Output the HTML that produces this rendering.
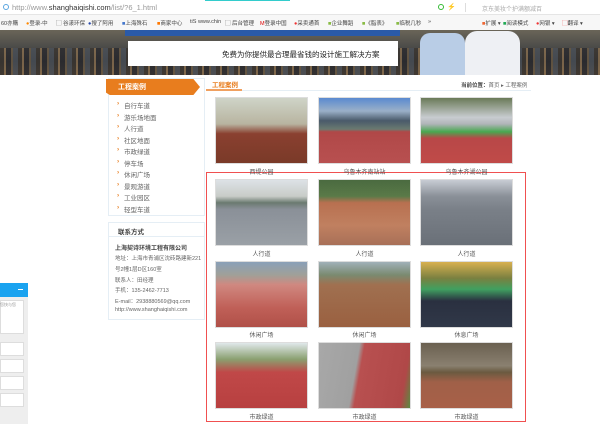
<!DOCTYPE html>
<html><head><meta charset="utf-8"><style>
*{margin:0;padding:0;box-sizing:border-box}
body{width:600px;height:424px;overflow:hidden;background:#fff;font-family:"Liberation Sans","Noto Sans CJK SC",sans-serif;position:relative;font-size:6px;color:#555}
.a{position:absolute;white-space:nowrap}
.img{position:absolute;width:93px;height:67px;border:1px solid #ddd}
.cap{position:absolute;width:93px;text-align:center;font-size:6px;color:#555}
.li{position:absolute;left:124px;font-size:6.5px;color:#666;white-space:nowrap}
.li:before{content:"›";color:#e87d1e;position:absolute;left:-7px;font-weight:bold}
.ct{position:absolute;left:115px;font-size:5.5px;color:#666;white-space:nowrap}
.bm{position:absolute;top:19px;font-size:5.5px;color:#444;white-space:nowrap}
</style></head><body>
<div class="a" style="left:0;top:0;width:600px;height:15px;background:#fff;border-bottom:1px solid #e5e5e5"></div>
<div class="a" style="left:3px;top:4px;width:6px;height:6px;border:1px solid #5aa6e0;border-radius:50%"></div>
<div class="a" style="left:12px;top:3px;font-size:7.5px;color:#999">http://www.<span style="color:#333">shanghaiqishi.com</span>/list/?6_1.html</div>
<div class="a" style="left:205px;top:0;width:85px;height:1px;background:#3cc"></div>
<div class="a" style="left:438px;top:4px;width:6px;height:6px;border:1.5px solid #3b3;border-radius:50%"></div>
<div class="a" style="left:447px;top:3px;font-size:7px;color:#3b3">⚡</div>
<div class="a" style="left:465px;top:3px;width:1px;height:9px;background:#ddd"></div>
<div class="a" style="left:482px;top:4px;font-size:6px;color:#aaa">京东美妆个护满额减百</div>
<div class="a" style="left:0;top:15px;width:600px;height:15px;background:#f7f7f7"></div>
<div class="bm" style="left:1px">60亦購</div>
<div class="bm" style="left:26px"><span style="color:#f80">●</span>登录-中</div>
<div class="bm" style="left:56px">▢ 谷漾环保</div>
<div class="bm" style="left:88px"><span style="color:#24a">●</span>搜了阿用</div>
<div class="bm" style="left:122px"><span style="color:#47c">■</span>上海殊石</div>
<div class="bm" style="left:157px"><span style="color:#f70">■</span>商家中心</div>
<div class="bm" style="left:190px">tiS www.chin</div>
<div class="bm" style="left:225px">▢ 后台管理</div>
<div class="bm" style="left:260px"><span style="color:#d00">M</span>登录中国</div>
<div class="bm" style="left:294px"><span style="color:#e33">●</span>采卖通首</div>
<div class="bm" style="left:328px"><span style="color:#8b4">■</span>企业舞蹈</div>
<div class="bm" style="left:362px"><span style="color:#8b4">■</span>《脂表》</div>
<div class="bm" style="left:396px"><span style="color:#8b4">■</span>临税几秒</div>
<div class="bm" style="left:428px">»</div>
<div class="bm" style="left:482px"><span style="color:#e63">■</span>扩展 ▾</div>
<div class="bm" style="left:503px"><span style="color:#2a5">■</span>阅读模式</div>
<div class="bm" style="left:536px"><span style="color:#e33">●</span>网银 ▾</div>
<div class="bm" style="left:562px"><span style="color:#e33">▢</span>翻译 ▾</div>
<!-- banner -->
<div class="a" style="left:0;top:30px;width:600px;height:45px;background:linear-gradient(180deg,#6a6558 0%,#4a4a48 40%,#2c2d30 70%,#5a4a38 100%)"></div>
<div class="a" style="left:0;top:48px;width:600px;height:27px;background:repeating-linear-gradient(90deg,#3a3530 0 4px,#8a7050 4px 6px,#2a2a2e 6px 11px,#6a5a44 11px 13px,#4a5058 13px 18px);opacity:.8"></div>
<div class="a" style="left:125px;top:30px;width:275px;height:6px;background:#2a5aa8"></div>
<div class="a" style="left:128px;top:41px;width:270px;height:25px;background:#fff"></div>
<div class="a" style="left:222px;top:49px;font-size:7.5px;color:#222">免费为你提供最合理最省钱的设计施工解决方案</div>
<div class="a" style="left:420px;top:33px;width:45px;height:42px;background:#b9cde6;border-radius:10px 10px 0 0"></div>
<div class="a" style="left:465px;top:31px;width:55px;height:44px;background:#eef0f4;border-radius:12px 12px 0 0"></div>
<!-- left widget -->
<div class="a" style="left:0;top:283px;width:28px;height:141px;background:#eee"></div>
<div class="a" style="left:0;top:283px;width:28px;height:14px;background:#1aa3f0"></div>
<div class="a" style="left:18px;top:289px;width:5px;height:1px;background:#fff"></div>
<div class="a" style="left:0;top:300px;width:24px;height:34px;background:#fff;border:1px solid #ddd"></div>
<div class="a" style="left:0;top:302px;font-size:4px;color:#999">您快与您</div>
<div class="a" style="left:0;top:342px;width:24px;height:14px;background:#fff;border:1px solid #ddd"></div>
<div class="a" style="left:0;top:359px;width:24px;height:14px;background:#fff;border:1px solid #ddd"></div>
<div class="a" style="left:0;top:376px;width:24px;height:14px;background:#fff;border:1px solid #ddd"></div>
<div class="a" style="left:0;top:393px;width:24px;height:14px;background:#fff;border:1px solid #ddd"></div>
<!-- sidebar -->
<div class="a" style="left:108px;top:78px;width:97px;height:138px;border:1px solid #e5eef5"></div>
<div class="a" style="left:106px;top:79px;width:94px;height:16px;background:#e87d1e;clip-path:polygon(0 0,93% 0,100% 50%,93% 100%,4% 100%,0 85%)"></div>
<div class="a" style="left:118px;top:82px;font-size:7px;color:#fff;font-weight:bold">工程案例</div>
<div class="li" style="top:100px">自行车道</div>
<div class="li" style="top:111.5px">游乐场地面</div>
<div class="li" style="top:123px">人行道</div>
<div class="li" style="top:134.5px">社区地面</div>
<div class="li" style="top:146px">市政绿道</div>
<div class="li" style="top:157.5px">停车场</div>
<div class="li" style="top:169px">休闲广场</div>
<div class="li" style="top:180.5px">景观游道</div>
<div class="li" style="top:192px">工业园区</div>
<div class="li" style="top:203.5px">轻型车道</div>
<div class="a" style="left:108px;top:222px;width:97px;height:98px;border:1px solid #e5eef5"></div>
<div class="a" style="left:108px;top:236px;width:97px;height:1px;background:#e5eef5"></div>
<div class="a" style="left:118px;top:226px;font-size:6.5px;color:#444;font-weight:bold">联系方式</div>
<div class="ct" style="top:243px;color:#444;font-weight:bold;font-size:6px">上海契诗环境工程有限公司</div>
<div class="ct" style="top:254px">地址：上海市青浦区沈砖路建新221</div>
<div class="ct" style="top:265px">号2幢1层D区160室</div>
<div class="ct" style="top:276px">联系人：田经理</div>
<div class="ct" style="top:286px">手机：135-2462-7713</div>
<div class="ct" style="top:297px">E-mail：2938880569@qq.com</div>
<div class="ct" style="top:307px">http://www.shanghaiqishi.com</div>
<!-- content -->
<div class="a" style="left:206px;top:90px;width:325px;height:1px;background:#e5eef5"></div>
<div class="a" style="left:206px;top:89px;width:36px;height:2px;background:#f0a060"></div>
<div class="a" style="left:212px;top:79px;font-size:6.5px;color:#e87d1e;font-weight:bold">工程案例</div>
<div class="a" style="left:461px;top:81px;font-size:5.5px;color:#666"><b style="color:#444">当前位置：</b>首页 ▸ 工程案例</div>
<div class="a" style="left:206px;top:172px;width:320px;height:250px;border:1.5px solid #f05050"></div>

<div class="img" style="left:215px;top:97px;background:linear-gradient(180deg,#cfd4c8 0%,#b8b4a0 40%,#8a4030 55%,#7a3a28 100%)"></div>
<div class="img" style="left:318px;top:97px;background:linear-gradient(180deg,#5a8ad0 0%,#9ab0c8 20%,#4a5a6a 35%,#6a7a70 48%,#b04848 52%,#b85050 100%)"></div>
<div class="img" style="left:420px;top:97px;background:linear-gradient(180deg,#6a7a58 0%,#c8ccd0 30%,#b0b4b8 40%,#48a850 52%,#b84848 62%,#c04a48 100%)"></div>
<div class="cap" style="left:215px;top:167px">西堤公园</div>
<div class="cap" style="left:318px;top:167px">乌鲁木齐南站站</div>
<div class="cap" style="left:420px;top:167px">乌鲁木齐湖公园</div>

<div class="img" style="left:215px;top:179px;background:linear-gradient(180deg,#dde2e6 0%,#c8ccc8 25%,#6a7a70 35%,#8a9098 45%,#9aa0a6 100%)"></div>
<div class="img" style="left:318px;top:179px;background:linear-gradient(180deg,#4a6a40 0%,#5a7a48 25%,#b87050 35%,#c08060 70%,#a87058 100%)"></div>
<div class="img" style="left:420px;top:179px;background:linear-gradient(180deg,#c8ccd4 0%,#8a9098 25%,#7a8088 45%,#6a7078 100%)"></div>
<div class="cap" style="left:215px;top:249px">人行道</div>
<div class="cap" style="left:318px;top:249px">人行道</div>
<div class="cap" style="left:420px;top:249px">人行道</div>

<div class="img" style="left:215px;top:261px;background:linear-gradient(180deg,#8aa0b8 0%,#a0a098 20%,#d08880 35%,#c06058 70%,#b05048 100%)"></div>
<div class="img" style="left:318px;top:261px;background:linear-gradient(180deg,#a0b0b8 0%,#7a8a70 20%,#a07050 35%,#9a6040 100%)"></div>
<div class="img" style="left:420px;top:261px;background:linear-gradient(180deg,#d8b050 0%,#7a8040 25%,#40a060 42%,#2a3040 60%,#303848 100%)"></div>
<div class="cap" style="left:215px;top:330px">休闲广场</div>
<div class="cap" style="left:318px;top:330px">休闲广场</div>
<div class="cap" style="left:420px;top:330px">休息广场</div>

<div class="img" style="left:215px;top:342px;background:linear-gradient(180deg,#e0e8ea 0%,#8aa070 25%,#c04848 45%,#b84040 100%)"></div>
<div class="img" style="left:318px;top:342px;background:linear-gradient(100deg,#a8a8a8 0%,#a0a0a0 40%,#b85050 45%,#b04848 90%,#5a8a40 100%)"></div>
<div class="img" style="left:420px;top:342px;background:linear-gradient(180deg,#6a6050 0%,#8a8070 35%,#6a5a40 45%,#a06048 60%,#a86048 100%)"></div>
<div class="cap" style="left:215px;top:412px">市政绿道</div>
<div class="cap" style="left:318px;top:412px">市政绿道</div>
<div class="cap" style="left:420px;top:412px">市政绿道</div>
</body></html>
